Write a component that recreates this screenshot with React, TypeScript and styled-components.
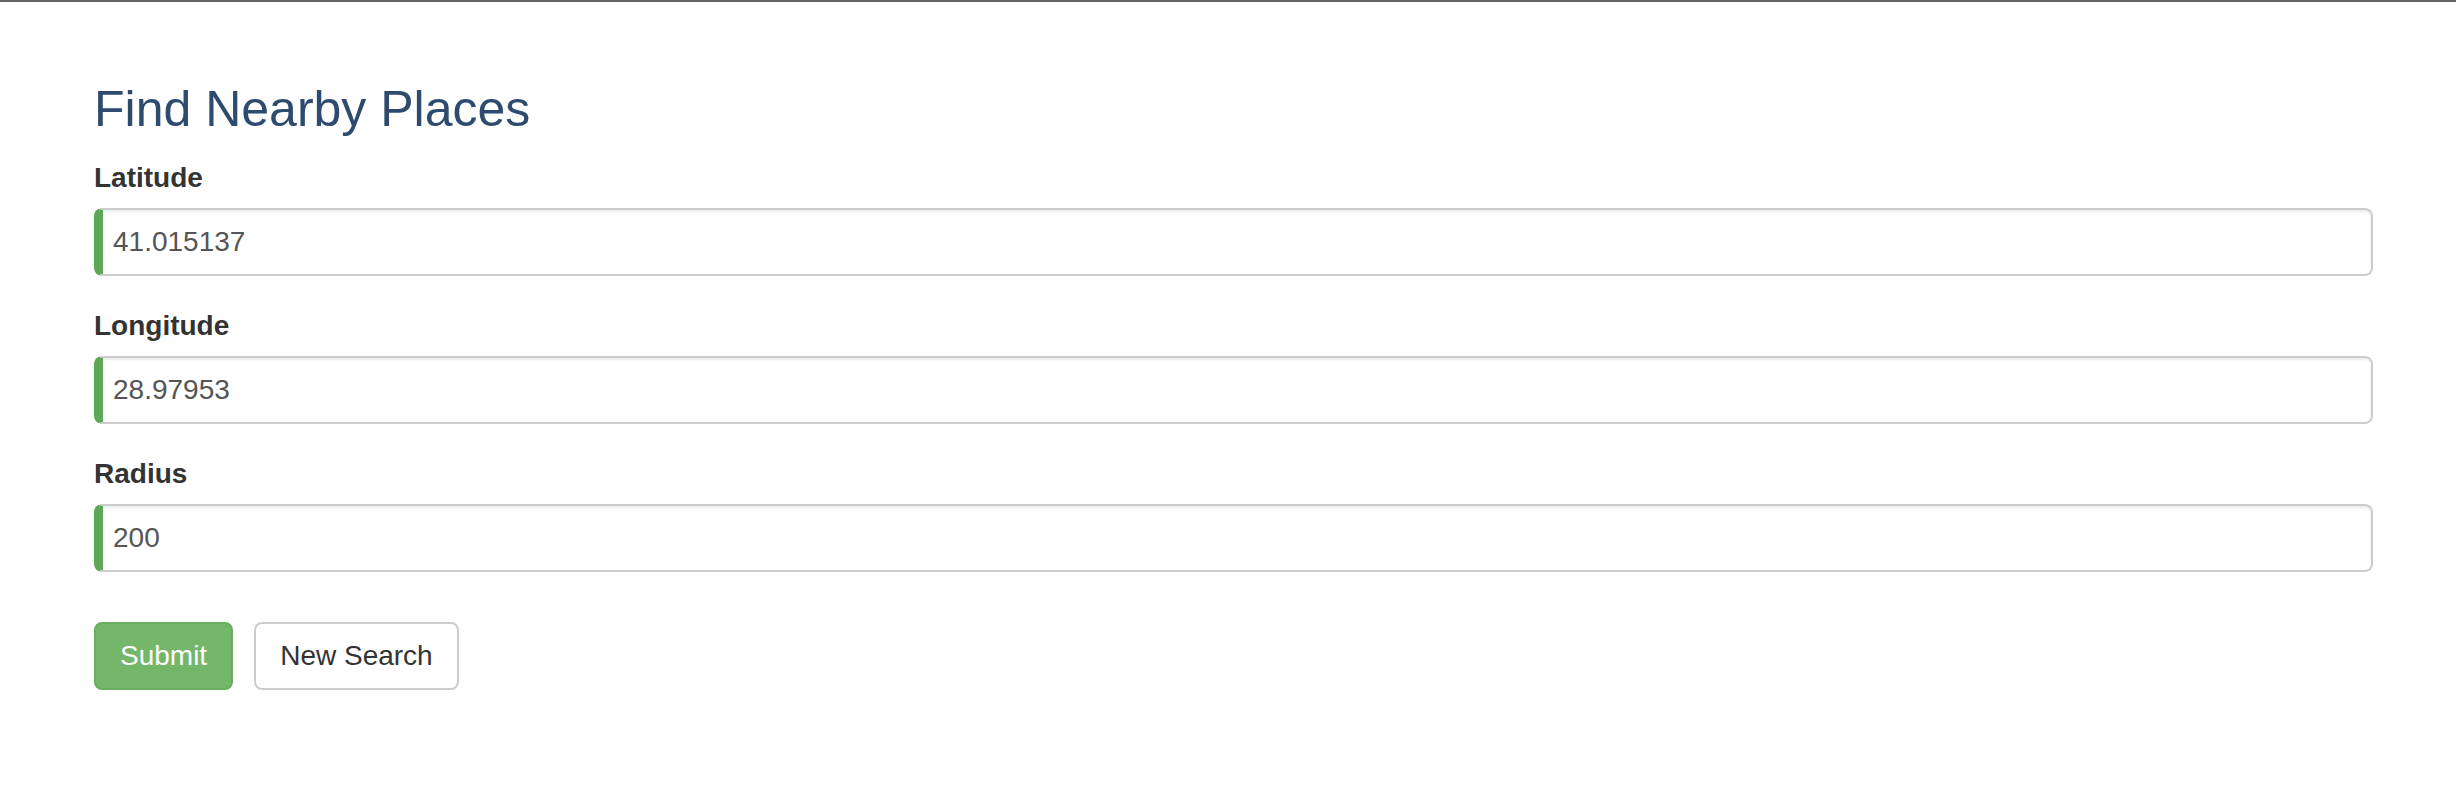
import React from 'react';
import styled, {createGlobalStyle} from "styled-components";

const GlobalStyle = createGlobalStyle`
    html, body {
        margin: 0;
        padding: 0;
        background: #ffffff;
    }
    body {
        font-family: "Liberation Sans", Arial, Helvetica, sans-serif;
        color: #333333;
    }
    * {
        box-sizing: border-box;
    }
`

const fields = [
    {label: "Latitude", value: "41.015137"},
    {label: "Longitude", value: "28.97953"},
    {label: "Radius", value: "200"},
];

const App = () => {
    return (
        <>
            <GlobalStyle/>
            <Page>
                <Title>Find Nearby Places</Title>
                <Form onSubmit={e => e.preventDefault()}>
                    {fields.map(f => (
                        <FormGroup key={f.label}>
                            <Label>{f.label}</Label>
                            <Input type="text" defaultValue={f.value}/>
                        </FormGroup>
                    ))}
                    <Actions>
                        <Button type="submit" variant="success">Submit</Button>
                        <Button type="button">New Search</Button>
                    </Actions>
                </Form>
            </Page>
        </>
    );
};

export default App;

const Page = styled.div`
    border-top: 2px solid #656565;
    padding: 80px 83px 80px 94px;
    min-height: 808px;
`

const Title = styled.h3`
    margin: 0 0 21px;
    font-size: 50px;
    line-height: 55px;
    font-weight: 400;
    color: #2d4b6f;
`

const Form = styled.form`
    display: flex;
    flex-direction: column;
`

const FormGroup = styled.div`
    display: flex;
    flex-direction: column;
    margin-bottom: 30px;
`

const Label = styled.label`
    font-size: 28px;
    line-height: 40px;
    font-weight: 700;
    color: #333333;
    margin-bottom: 10px;
`

const Input = styled.input`
    height: 68px;
    width: 100%;
    padding: 0 20px 0 10px;
    font-family: inherit;
    font-size: 28px;
    color: #555555;
    background: #ffffff;
    border: 2px solid #cccccc;
    border-left: 9px solid #5ca857;
    border-radius: 8px;
    box-shadow: inset 0 2px 2px rgba(0, 0, 0, 0.075);
    outline: none;
`

const Actions = styled.div`
    display: flex;
    gap: 21px;
    margin-top: 20px;
`

const Button = styled.button<{ variant?: "success" }>`
    height: 68px;
    padding: 0 24px;
    font-family: inherit;
    font-size: 28px;
    border-radius: 8px;
    cursor: pointer;
    border: 2px solid ${p => p.variant === "success" ? "#6aae5f" : "#cccccc"};
    background: ${p => p.variant === "success" ? "#74b66a" : "#ffffff"};
    color: ${p => p.variant === "success" ? "#ffffff" : "#333333"};
`
